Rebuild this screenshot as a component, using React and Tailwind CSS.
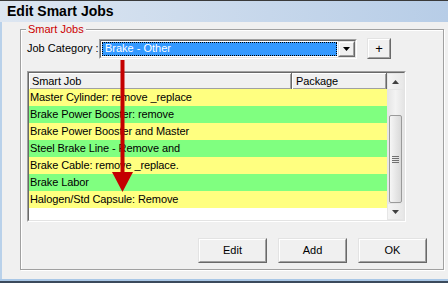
const rows = [
  { label: "Master Cylinder: remove _replace", color: "bg-[#ffff80]" },
  { label: "Brake Power Booster: remove", color: "bg-[#80ff80]" },
  { label: "Brake Power Booster and Master", color: "bg-[#ffff80]" },
  { label: "Steel Brake Line - Remove and", color: "bg-[#80ff80]" },
  { label: "Brake Cable: remove _replace.", color: "bg-[#ffff80]" },
  { label: "Brake Labor", color: "bg-[#80ff80]" },
  { label: "Halogen/Std Capsule: Remove", color: "bg-[#ffff80]" },
]

// classic raised 3D button
const WinButton = ({ children, className = "" }) => (
  <div className={`border border-t-[#e3e3e3] border-l-[#e3e3e3] border-b-[#696969] border-r-[#696969] bg-[#f0f0f0] ${className}`}>
    <div className="flex h-full w-full items-center justify-center border border-t-white border-l-white border-b-[#a0a0a0] border-r-[#a0a0a0]">
      {children}
    </div>
  </div>
)

const ScrollArrow = ({ up }) => (
  <div className="flex h-[17px] items-center justify-center border border-[#e6e6e6] bg-gradient-to-r from-[#f4f4f4] to-[#e8e8e8]">
    <svg width="7" height="4" viewBox="0 0 7 4">
      {up ? <polygon points="3.5,0 7,4 0,4" fill="#404040" /> : <polygon points="0,0 7,0 3.5,4" fill="#404040" />}
    </svg>
  </div>
)

const SmartJobList = () => (
  <div className="mt-[12px] h-[151px] w-[379px] border border-t-[#a0a0a0] border-l-[#a0a0a0] border-b-white border-r-white">
    <div className="flex h-full w-full border border-t-[#696969] border-l-[#696969] border-b-[#e3e3e3] border-r-[#e3e3e3] bg-white">
      <div className="w-[358px] tracking-[-0.1px]">
        {/* Header */}
        <div className="flex h-[16px]">
          <div className="flex w-[263px] items-center border-r border-r-[#696969] bg-[#f0f0f0] pl-[3px] shadow-[inset_1px_1px_0_#fff,inset_-1px_-1px_0_#a0a0a0]">
            Smart Job
          </div>
          <div className="flex w-[95px] items-center border-r border-r-[#696969] bg-[#f0f0f0] pl-[4px] shadow-[inset_1px_1px_0_#fff,inset_-1px_-1px_0_#a0a0a0]">
            Package
          </div>
        </div>
        {rows.map((row) => (
          <div key={row.label} className={`flex h-[17px] items-center pl-[1px] ${row.color}`}>
            {row.label}
          </div>
        ))}
      </div>

      {/* Scrollbar */}
      <div className="flex w-[17px] flex-col bg-gradient-to-r from-[#e4e4e4] via-[#f3f3f3] to-[#e4e4e4]">
        <ScrollArrow up />
        <div className="flex-1 px-[2px]">
          <div className="mt-[25px] flex h-[88px] flex-col items-center justify-center gap-[1px] rounded-[2px] border border-[#9a9a9a] bg-gradient-to-r from-[#f6f6f6] to-[#d9d9d9]">
            <div className="h-[1px] w-[7px] bg-[#707070]" />
            <div className="h-[1px] w-[7px] bg-[#707070]" />
            <div className="h-[1px] w-[7px] bg-[#707070]" />
            <div className="h-[1px] w-[7px] bg-[#707070]" />
          </div>
        </div>
        <ScrollArrow />
      </div>
    </div>
  </div>
)

const App = () => {
  return (
    <div className="relative h-[283px] w-[448px] overflow-hidden bg-[#f0f0f0] font-['Liberation_Sans',Arial,sans-serif] text-[11px] text-black">
      {/* Title bar */}
      <div className="flex h-[22px] items-center border-t border-t-[#3a3a3a] bg-gradient-to-r from-[#dde6f1] to-[#b7cde7] pl-[7px] text-[14px] font-bold">
        Edit Smart Jobs
      </div>

      <div className="flex h-[257px] flex-col border-l-2 border-l-[#b9d1ea]">
        {/* Group box */}
        <div className="relative ml-[18px] mt-[7px] h-[241px] w-[424px] border border-[#a0a0a0] shadow-[1px_1px_0_#fff,inset_1px_1px_0_#fff]">
          <span className="absolute left-[5px] top-[-8px] bg-[#f0f0f0] px-[2px] leading-[14px] text-[#cc0000]">Smart Jobs</span>

          <div className="pl-[6px] pt-[8px]">
            <div className="flex items-center">
              <div className="w-[72px]">Job Category :</div>
              <div className="h-[20px] w-[258px] border border-t-[#a0a0a0] border-l-[#a0a0a0] border-b-white border-r-white">
                <div className="flex h-full w-full border border-t-[#696969] border-l-[#696969] border-b-[#e3e3e3] border-r-[#e3e3e3] bg-white">
                  <div className="flex-1 p-[1px]">
                    <div className="flex h-full items-center border border-dotted border-black bg-[#3399ff] pl-[2px] text-white">
                      Brake - Other
                    </div>
                  </div>
                  <WinButton className="w-[17px]">
                    <svg width="7" height="4" viewBox="0 0 7 4">
                      <polygon points="0,0 7,0 3.5,4" fill="#000" />
                    </svg>
                  </WinButton>
                </div>
              </div>
              <WinButton className="ml-[10px] h-[21px] w-[24px] text-[13px]">+</WinButton>
            </div>

            <SmartJobList />
          </div>

          <div className="mt-[16px] flex justify-end gap-[11px] pr-[16px]">
            <WinButton className="h-[25px] w-[69px]">Edit</WinButton>
            <WinButton className="h-[25px] w-[69px]">Add</WinButton>
            <WinButton className="h-[25px] w-[69px]">OK</WinButton>
          </div>
        </div>
      </div>

      {/* Window bottom frame */}
      <div className="h-[2px] bg-[#a9c7e6]" />
      <div className="h-[2px] bg-[#3b4a5c]" />

      {/* Red annotation arrow */}
      <svg className="pointer-events-none absolute left-0 top-0" width="448" height="283">
        <rect x="120.5" y="60" width="4" height="114" fill="#c40000" />
        <polygon points="112,172 133,172 122.5,192" fill="#c40000" />
      </svg>
    </div>
  )
}

export default App
